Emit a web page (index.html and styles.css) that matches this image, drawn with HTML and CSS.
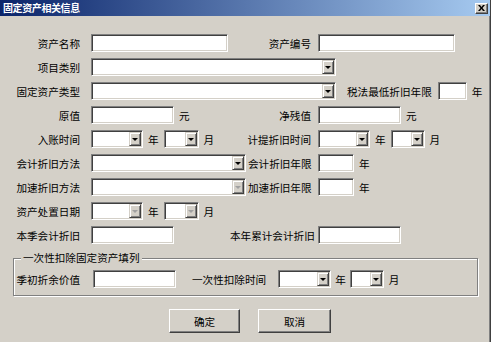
FILE: index.html
```html
<!DOCTYPE html>
<html lang="zh-CN">
<head>
  <meta charset="UTF-8" />
  <title>固定资产相关信息</title>
  <link rel="stylesheet" href="styles.css">
</head>
<body>
  <div class="dialog">
    <div class="titlebar">
      <span class="title">固定资产相关信息</span>
      <span class="close">
        <svg width="7" height="6" viewBox="0 0 7 6"><path d="M0 0h2l1.5 2 1.5-2h2l-2.5 3 2.5 3h-2l-1.5-2-1.5 2h-2l2.5-3z" fill="#000"/></svg>
      </span>
    </div>

    <div class="form">
      <div class="row">
        <div class="left">
          <label class="lbl">资产名称</label>
          <span class="edit w137"></span>
        </div>
        <label class="rlbl">资产编号</label>
        <span class="edit w137"></span>
      </div>

      <div class="row">
        <label class="lbl">项目类别</label>
        <span class="combo w245"><i class="drop"></i></span>
      </div>

      <div class="row">
        <label class="lbl">固定资产类型</label>
        <span class="combo w245"><i class="drop"></i></span>
        <label class="tax">税法最低折旧年限</label>
        <span class="edit w29"></span>
        <span class="unit">年</span>
      </div>

      <div class="row">
        <div class="left">
          <label class="lbl">原值</label>
          <span class="edit w83"></span>
          <span class="unit">元</span>
        </div>
        <label class="rlbl">净残值</label>
        <span class="edit w83"></span>
        <span class="unit">元</span>
      </div>

      <div class="row">
        <div class="left">
          <label class="lbl">入账时间</label>
          <span class="combo w52"><i class="drop"></i></span>
          <span class="unit">年</span>
          <span class="combo w35 gap"><i class="drop"></i></span>
          <span class="unit">月</span>
        </div>
        <label class="rlbl">计提折旧时间</label>
        <span class="combo w52"><i class="drop"></i></span>
        <span class="unit">年</span>
        <span class="combo w34 gap"><i class="drop"></i></span>
        <span class="unit">月</span>
      </div>

      <div class="row">
        <label class="lbl">会计折旧方法</label>
        <span class="combo w155"><i class="drop"></i></span>
        <label class="rlbl short">会计折旧年限</label>
        <span class="edit w36"></span>
        <span class="unit">年</span>
      </div>

      <div class="row">
        <label class="lbl">加速折旧方法</label>
        <span class="combo w155 disabled"><i class="drop"></i></span>
        <label class="rlbl short">加速折旧年限</label>
        <span class="edit w36"></span>
        <span class="unit">年</span>
      </div>

      <div class="row">
        <label class="lbl">资产处置日期</label>
        <span class="combo w52 disabled"><i class="drop"></i></span>
        <span class="unit">年</span>
        <span class="combo w35 gap disabled"><i class="drop"></i></span>
        <span class="unit">月</span>
      </div>

      <div class="row">
        <div class="left">
          <label class="lbl">本季会计折旧</label>
          <span class="edit w83"></span>
        </div>
        <label class="rlbl">本年累计会计折旧</label>
        <span class="edit w83"></span>
      </div>

      <div class="group">
        <div class="legend">一次性扣除固定资产填列</div>
        <div class="row">
          <label class="glbl">季初折余价值</label>
          <span class="edit w83"></span>
          <label class="dlbl">一次性扣除时间</label>
          <span class="combo w53"><i class="drop"></i></span>
          <span class="unit tight">年</span>
          <span class="combo w34 gap-s"><i class="drop"></i></span>
          <span class="unit">月</span>
        </div>
      </div>

      <div class="buttons">
        <button class="btn">确定</button>
        <button class="btn wide">取消</button>
      </div>
    </div>
  </div>
</body>
</html>
```

FILE: styles.css
```css
body, html {
  margin: 0;
  padding: 0;
  background: #d4d0c8;
  font-family: "Noto Sans CJK SC", "Liberation Sans", sans-serif;
  font-size: 10.6px;
  color: #000;
}
.dialog {
  width: 491px;
  height: 342px;
  box-sizing: border-box;
  border-right: 1px solid #404040;
  box-shadow: inset -1px 0 0 #808080;
  background: #d4d0c8;
  overflow: hidden;
}
.titlebar {
  height: 16px;
  display: flex;
  align-items: center;
  justify-content: space-between;
  padding: 0 2px 0 3px;
  background: linear-gradient(to right, #0a246a, #a6caf0);
}
.title {
  color: #fff;
  font-weight: bold;
  font-size: 10px;
  letter-spacing: -0.4px;
  line-height: 12px;
}
.close {
  width: 13px;
  height: 11px;
  box-sizing: border-box;
  display: flex;
  align-items: center;
  justify-content: center;
  background: #d4d0c8;
  border: 1px solid;
  border-color: #fff #404040 #404040 #fff;
  box-shadow: inset -1px -1px 0 #808080;
}
.form {
  padding-top: 18px;
  display: flex;
  flex-direction: column;
  gap: 6px;
}
.row {
  display: flex;
  align-items: center;
  height: 18px;
  white-space: nowrap;
}
.left {
  width: 230px;
  display: flex;
  align-items: center;
  flex: none;
}
.lbl {
  width: 80px;
  margin-right: 11px;
  text-align: right;
  flex: none;
}
.rlbl {
  width: 81px;
  margin-right: 7px;
  text-align: right;
  flex: none;
}
.rlbl.short {
  width: 63px;
  margin-left: 2px;
}
.tax {
  margin: 0 6px 0 11px;
}
.glbl {
  width: 66px;
  margin-right: 13px;
  text-align: right;
  flex: none;
}
.dlbl {
  margin: 0 12px 0 16px;
}
.unit {
  margin-left: 5px;
}
.unit.tight {
  margin-left: 4px;
}
.edit, .combo {
  display: inline-flex;
  height: 18px;
  box-sizing: border-box;
  background: #fff;
  border: 1px solid;
  border-color: #808080 #fff #fff #808080;
  box-shadow: inset 1px 1px 0 #404040, inset -1px -1px 0 #d4d0c8;
  flex: none;
}
.combo {
  justify-content: flex-end;
  align-items: center;
  padding: 1px;
}
.combo.gap { margin-left: 5px; }
.combo.gap-s { margin-left: 4px; }
.drop {
  width: 12px;
  height: 14px;
  box-sizing: border-box;
  background: #d4d0c8;
  border: 1px solid;
  border-color: #d4d0c8 #404040 #404040 #d4d0c8;
  box-shadow: inset 1px 1px 0 #fff, inset -1px -1px 0 #808080;
  display: flex;
  align-items: center;
  justify-content: center;
}
.drop::after {
  content: "";
  border-left: 3px solid transparent;
  border-right: 3px solid transparent;
  border-top: 3px solid #000;
  margin-top: 1px;
}
.disabled .drop::after {
  border-top-color: #a0a0a0;
}
.w137 { width: 137px; }
.w245 { width: 245px; }
.w155 { width: 155px; }
.w83 { width: 83px; }
.w52 { width: 52px; }
.w53 { width: 53px; }
.w35 { width: 35px; }
.w34 { width: 34px; }
.w36 { width: 36px; }
.w29 { width: 29px; }
.group {
  margin: 8px 0 0 13px;
  width: 465px;
  height: 38px;
  box-sizing: border-box;
  border: 1px solid #808080;
  box-shadow: inset 1px 1px 0 #fff, 1px 1px 0 #fff;
}
.legend {
  width: fit-content;
  margin: -7px 0 0 7px;
  padding: 0 2px;
  line-height: 12px;
  background: #d4d0c8;
}
.group .row {
  margin-top: 6px;
}
.buttons {
  display: flex;
  gap: 18px;
  padding-left: 169px;
  margin-top: 7px;
}
.btn {
  width: 71px;
  height: 24px;
  padding: 0;
  font-family: inherit;
  font-size: 10.6px;
  color: #000;
  background: #d4d0c8;
  border: 1px solid;
  border-color: #fff #404040 #404040 #fff;
  box-shadow: inset -1px -1px 0 #808080;
}
.btn.wide {
  width: 73px;
}
```
